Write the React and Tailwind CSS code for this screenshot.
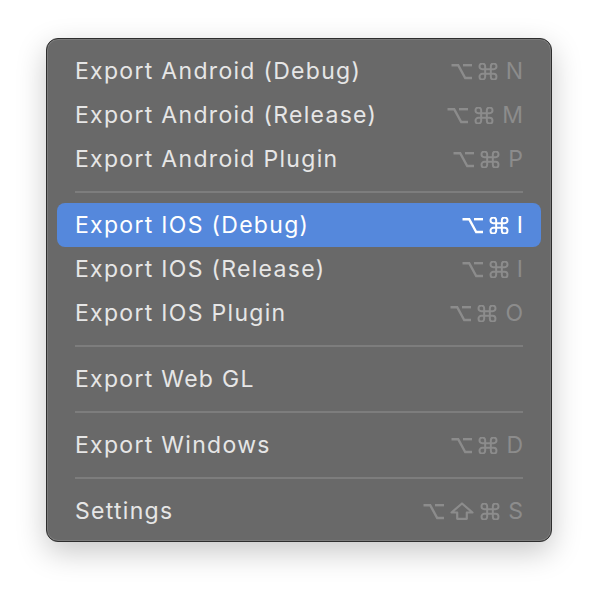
const groups = [
  [
    { label: 'Export Android (Debug)', keys: ['opt', 'cmd', 'N'] },
    { label: 'Export Android (Release)', keys: ['opt', 'cmd', 'M'] },
    { label: 'Export Android Plugin', keys: ['opt', 'cmd', 'P'] },
  ],
  [
    { label: 'Export IOS (Debug)', keys: ['opt', 'cmd', 'I'], active: true },
    { label: 'Export IOS (Release)', keys: ['opt', 'cmd', 'I'] },
    { label: 'Export IOS Plugin', keys: ['opt', 'cmd', 'O'] },
  ],
  [{ label: 'Export Web GL', keys: [] }],
  [{ label: 'Export Windows', keys: ['opt', 'cmd', 'D'] }],
  [{ label: 'Settings', keys: ['opt', 'shift', 'cmd', 'S'] }],
];

function OptionKey() {
  return (
    <svg width="21" height="17" viewBox="0 0 21 17" fill="none" stroke="currentColor" strokeWidth="2.4">
      <path d="M0.5 2.2 H7.2 L14.2 15 H21" />
      <path d="M12 2.2 H21" />
    </svg>
  );
}

function ShiftKey() {
  return (
    <svg width="24" height="18" viewBox="0 0 24 18" fill="none" stroke="currentColor" strokeWidth="2.2" strokeLinejoin="round">
      <path d="M12 1.5 L22.5 10.5 H16.8 V16.8 H7.2 V10.5 H1.5 Z" />
    </svg>
  );
}

function CommandKey() {
  return (
    <svg width="20" height="17" viewBox="0 0 20 18" fill="none" stroke="currentColor" strokeWidth="2.1">
      <path d="M7 6.5 V3.5 a3 3 0 1 0 -3 3 h12 a3 3 0 1 0 -3 -3 v11 a3 3 0 1 0 3 -3 h-12 a3 3 0 1 0 3 3 z" />
    </svg>
  );
}

function Key({ k }) {
  if (k === 'opt') return <OptionKey />;
  if (k === 'shift') return <ShiftKey />;
  if (k === 'cmd') return <CommandKey />;
  return <span className="ml-[2px] text-[23px] leading-none">{k}</span>;
}

function Item({ item }) {
  return (
    <div
      className={
        'mx-[10px] flex h-[44px] items-center justify-between rounded-[8px] pl-[18px] pr-[18px] ' +
        (item.active ? 'bg-[#5588dc] text-white' : 'text-[#e6e6e6]')
      }
    >
      <span className="pt-[1px] text-[23px] tracking-[1.3px]">{item.label}</span>
      <span
        className={
          'flex items-center gap-[6px] ' + (item.active ? 'text-white' : 'text-[#8c8c8c]')
        }
      >
        {item.keys.map((k, i) => (
          <Key key={i} k={k} />
        ))}
      </span>
    </div>
  );
}

export default function App() {
  return (
    <div className="flex h-[596px] w-[598px] items-start bg-white pl-[46px] pt-[38px] font-['Inter',sans-serif]">
      <div className="w-[506px] rounded-[12px] border border-[#2e2e2e] bg-[#696969] pt-[10px] pb-[8px] shadow-[0_10px_30px_rgba(0,0,0,0.22),inset_0_0_0_1px_rgba(255,255,255,0.12)]">
        {groups.map((g, gi) => (
          <div key={gi}>
            {gi > 0 && (
              <div className="flex h-[22px] items-center px-[28px]">
                <div className="h-[2px] w-full bg-[#7d7d7d]" />
              </div>
            )}
            {g.map((item) => (
              <Item key={item.label} item={item} />
            ))}
          </div>
        ))}
      </div>
    </div>
  );
}
